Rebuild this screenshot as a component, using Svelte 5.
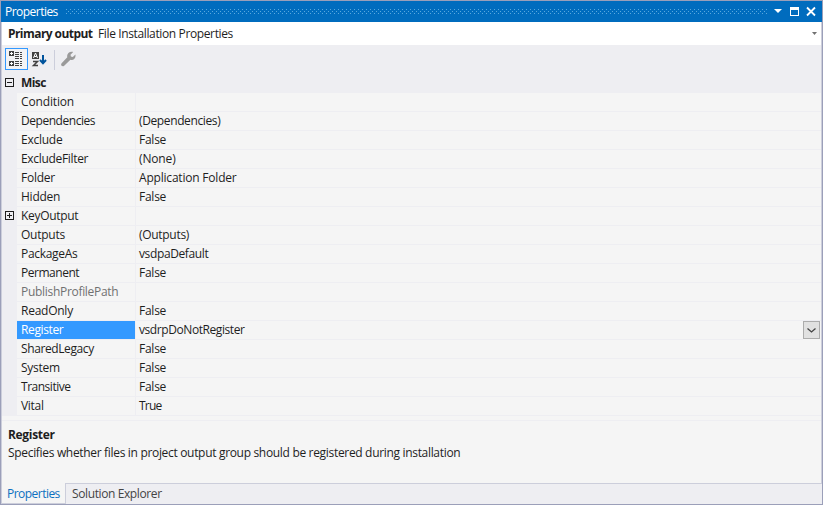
<script>
  // name, value, name tracking, value tracking (px)
  const rows = [
    ['Condition', '', -0.15, 0],
    ['Dependencies', '(Dependencies)', -0.46, -0.38],
    ['Exclude', 'False', -0.25, -0.25],
    ['ExcludeFilter', '(None)', -0.32, -0.15],
    ['Folder', 'Application Folder', -0.25, -0.2],
    ['Hidden', 'False', -0.25, -0.25],
    ['KeyOutput', '', -0.3, 0],
    ['Outputs', '(Outputs)', -0.25, -0.3],
    ['PackageAs', 'vsdpaDefault', -0.3, -0.38],
    ['Permanent', 'False', -0.47, -0.25],
    ['PublishProfilePath', '', -0.3, 0],
    ['ReadOnly', 'False', -0.25, -0.25],
    ['Register', 'vsdrpDoNotRegister', -0.38, -0.42],
    ['SharedLegacy', 'False', -0.4, -0.25],
    ['System', 'False', -0.25, -0.25],
    ['Transitive', 'False', -0.48, -0.25],
    ['Vital', 'True', -0.3, -0.75]
  ];
</script>

<div class="window">
  <header>
    <span>Properties</span>
    <svg class="grip" height="5" shape-rendering="crispEdges">
      <defs>
        <pattern id="dots" width="4" height="4" patternUnits="userSpaceOnUse">
          <path d="M0 0h1v1H0zM2 2h1v1H2z" fill="#59a8de" />
        </pattern>
      </defs>
      <rect width="100%" height="5" fill="url(#dots)" />
    </svg>
    <svg class="controls" width="50" height="21" viewBox="0 0 50 21">
      <path d="M2 8h8L6 12z" fill="#fff" />
      <path d="M18 6h9v9h-9zM19 9v5h7V9z" fill="#fff" fill-rule="evenodd" />
      <path d="M35 6.500l8 8M43 6.500l-8 8" stroke="#fff" stroke-width="1.8" />
    </svg>
  </header>
  <div class="content">
    <div class="object">
      <b>Primary output</b><span>File Installation Properties</span>
      <svg width="5" height="3"><path d="M0 0h5L2.500 3z" fill="#717171" /></svg>
    </div>
    <div class="toolbar">
      <button class="on" aria-label="Categorized">
        <svg width="16" height="16" viewBox="0 0 16 16" shape-rendering="crispEdges">
          <path d="M1 0h5v5H1zM1 10h5v5H1zM7 1h4v1H7zM7 3h4v1H7zM7 5h4v1H7zM7 7h4v1H7zM12 1h2v1h-2zM12 3h2v1h-2zM12 5h2v1h-2zM12 7h2v1h-2zM7 10h4v1H7zM7 12h4v1H7zM7 14h4v1H7zM12 10h2v1h-2zM12 12h2v1h-2zM12 14h2v1h-2z" fill="#424242" />
          <path d="M3 1h1v1h1v1H4v1H3V3H2V2h1zM3 11h1v1h1v1H4v1H3v-1H2v-1h1z" fill="#fff" />
        </svg>
      </button>
      <svg class="sort" width="16" height="16" viewBox="0 0 16 16">
        <path d="M1 1h7v7H1z" fill="#424242" />
        <path d="M2.500 7L4.500 2L6.500 7M3.300 5.500h2.400" fill="none" stroke="#fff" />
        <path d="M2 10.500h4.500L2.500 14.500H7" fill="none" stroke="#424242" stroke-width="1.500" />
        <path d="M12 4v8M9 9l3 3.200L15 9" fill="none" stroke="#00539c" stroke-width="2" />
      </svg>
      <i></i>
      <svg class="wrench" width="16" height="16" viewBox="0 0 16 16">
        <path d="M13.200 1L10.500 3.700l.4 1.900 1.900.4 2.600-2.600c.8 3.800-2 6.200-5 5.300L4.200 14.700c-1.900 1.600-4.100-.6-2.600-2.500L7.300 6.300C6.300 3 9.500-.1 13.200 1z" fill="#9a9a9a" />
      </svg>
    </div>
    <main>
      <div class="category">
        <svg width="9" height="9" shape-rendering="crispEdges"><path d="M.5.5h8v8h-8zM2 4.500h5" fill="none" stroke="#1e1e1e" /></svg>
        <b>Misc</b>
      </div>
      {#each rows as [name, value, nameTracking, valueTracking]}
        <div class="row" class:selected={name === 'Register'} class:disabled={name === 'PublishProfilePath'}>
          <div class="gutter">
            {#if name === 'KeyOutput'}
              <svg width="9" height="9" shape-rendering="crispEdges"><path d="M.5.5h8v8h-8zM2 4.500h5M4.500 2v5" fill="none" stroke="#1e1e1e" /></svg>
            {/if}
          </div>
          <div class="name" style:letter-spacing="{nameTracking}px">{name}</div>
          <div class="value" style:letter-spacing="{valueTracking}px">{value}</div>
          {#if name === 'Register'}
            <button class="drop" aria-label="Open">
              <svg width="9" height="5"><path d="M.5.5l4 3.500 4-3.500" fill="none" stroke="#444" stroke-width="1.300" /></svg>
            </button>
          {/if}
        </div>
      {/each}
    </main>
    <section>
      <b>Register</b>
      <p>Specifies whether files in project output group should be registered during installation</p>
    </section>
  </div>
  <nav>
    <div class="tab active">Properties</div>
    <div class="tab rest">Solution Explorer</div>
  </nav>
</div>

<style>
  :global(body) { margin: 0; }
  .window {
    box-sizing: border-box; width: 823px; height: 505px; display: flex; flex-direction: column;
    border: 1px solid #9b9fb9; background: #eeeef2; color: #1e1e1e;
    font: 12px/18px "Open Sans", "Noto Sans", sans-serif; letter-spacing: -0.32px; white-space: nowrap;
  }
  svg { display: block; flex: none; }
  b { font-weight: 700; }
  header { height: 21px; flex: none; display: flex; align-items: center; background: #006cbe; color: #fff; padding-left: 4px; }
  header span { width: 61px; letter-spacing: -0.53px; }
  .grip { flex: 1; width: 0; margin-right: 5px; }
  .content { flex: 1; display: flex; flex-direction: column; border: solid #cccedb; border-width: 0 1px; }
  .object { height: 23px; flex: none; display: flex; align-items: center; background: #fff; padding: 0 4px 0 6px; }
  .object b { width: 90px; letter-spacing: -0.56px; }
  .object span { letter-spacing: -0.37px; }
  .object svg { margin-left: auto; }
  .toolbar { box-sizing: border-box; height: 29px; flex: none; display: flex; padding: 3px 0 0 3px; }
  button { box-sizing: border-box; padding: 0; display: flex; align-items: center; justify-content: center; }
  .on { width: 23px; height: 22px; border: 1px solid #3399ff; background: #f3f3f5; justify-content: flex-start; padding-left: 2px; }
  .sort { margin: 3px 0 0 3px; }
  .toolbar i { width: 1px; height: 20px; background: #cccedb; margin: 2px 5px 0 7px; }
  .wrench { margin-top: 3px; }
  main { display: flex; flex-direction: column; flex: none; }
  .category { height: 19px; display: flex; padding-left: 3px; gap: 7px; }
  .category svg { margin-top: 4px; }
  .category b { letter-spacing: -0.6px; }
  .row { height: 19px; display: flex; }
  .gutter { width: 15px; padding: 4px 0 0 3px; box-sizing: border-box; }
  .name, .value { box-sizing: border-box; height: 19px; border-bottom: 1px solid #eeeef2; background: #f5f5f5; padding-left: 4px; }
  .name { width: 118px; }
  .value { flex: 1; border-left: 1px solid #eeeef2; padding-left: 3px; }
  .selected { background: #f5f5f5; }
  .selected .gutter { background: #eeeef2; }
  .selected .name { background: #3399ff; color: #fff; }
  .disabled .name { color: #717171; }
  .drop { width: 17px; height: 18px; border: 1px solid #acacac; background: #e1e1e1; margin-right: 1px; }
  section { flex: 1; background: #f5f5f5; padding: 0 6px; }
  section::before { content: ""; display: block; height: 4px; margin: 0 -6px 5px; border-bottom: 1px solid #eeeef2; }
  section p { margin: 0; letter-spacing: -0.32px; }
  nav { height: 21px; flex: none; display: flex; }
  .tab { box-sizing: border-box; padding-left: 6px; color: #444; line-height: 19px; letter-spacing: -0.39px; }
  .active { width: 64px; background: #f5f5f5; color: #0e70c0; border: solid #cccedb; border-width: 0 0 1px 1px; padding: 1px 0 0 5px; letter-spacing: -0.53px; }
  .rest { flex: 1; border: solid #cccedb; border-width: 1px 0 0 1px; }
</style>
